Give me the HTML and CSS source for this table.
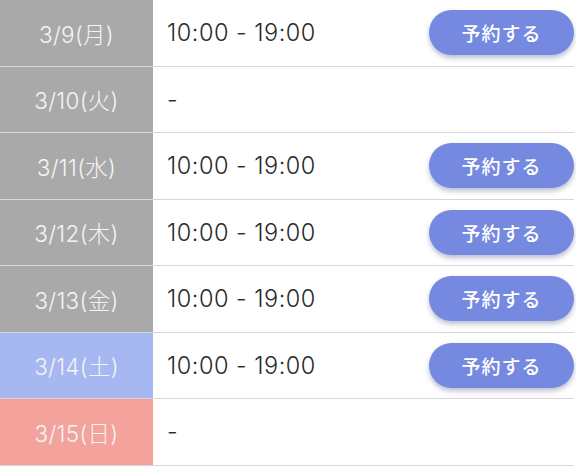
FILE: index.html
```html
<!DOCTYPE html>
<html lang="ja">
<head>
<meta charset="utf-8">
<link rel="stylesheet" href="styles.css">
</head>
<body>
<div class="schedule">
  <div class="row">
    <div class="day">3/9(月)</div>
    <div class="slot"><span class="time">10:00 - 19:00</span><button class="reserve">予約する</button></div>
  </div>
  <div class="row">
    <div class="day">3/10(火)</div>
    <div class="slot"><span class="time">-</span></div>
  </div>
  <div class="row">
    <div class="day">3/11(水)</div>
    <div class="slot"><span class="time">10:00 - 19:00</span><button class="reserve">予約する</button></div>
  </div>
  <div class="row">
    <div class="day">3/12(木)</div>
    <div class="slot"><span class="time">10:00 - 19:00</span><button class="reserve">予約する</button></div>
  </div>
  <div class="row">
    <div class="day">3/13(金)</div>
    <div class="slot"><span class="time">10:00 - 19:00</span><button class="reserve">予約する</button></div>
  </div>
  <div class="row">
    <div class="day sat">3/14(土)</div>
    <div class="slot"><span class="time">10:00 - 19:00</span><button class="reserve">予約する</button></div>
  </div>
  <div class="row">
    <div class="day sun">3/15(日)</div>
    <div class="slot"><span class="time">-</span></div>
  </div>
</div>
</body>
</html>
```
FILE: styles.css
```css
html, body {
  margin: 0;
  padding: 0;
  background: #fff;
}
body {
  font-family: "Inter", "Noto Sans CJK JP", sans-serif;
}
.schedule {
  width: 574px;
  display: grid;
  grid-auto-rows: 66.5px;
  border-top: 1px solid #e4e4e4;
  margin-top: -1px;
}
.row {
  display: grid;
  grid-template-columns: 153px 1fr;
  border-bottom: 1.5px solid #d6d6d6;
  box-sizing: border-box;
}
.day {
  background: #a9a9a9;
  color: #f4f4f4;
  font-size: 22.5px;
  font-weight: 300;
  letter-spacing: 0.3px;
  display: flex;
  align-items: center;
  justify-content: center;
}
.day.sat { background: #a7b7f1; }
.day.sun { background: #f3a39c; }
.slot {
  display: flex;
  align-items: center;
  justify-content: space-between;
  padding-left: 14px;
}
.time {
  font-size: 23.5px;
  font-weight: 300;
  letter-spacing: 0.5px;
  color: #2a2a2a;
}
.reserve {
  width: 145px;
  height: 45px;
  border: none;
  border-radius: 23px;
  background: #7489df;
  color: #fff;
  font-family: "Noto Sans CJK JP", sans-serif;
  font-size: 19px;
  font-weight: 500;
  letter-spacing: 1px;
  box-shadow: 0 3px 5px rgba(60, 70, 120, 0.35);
  padding: 0;
}
```
